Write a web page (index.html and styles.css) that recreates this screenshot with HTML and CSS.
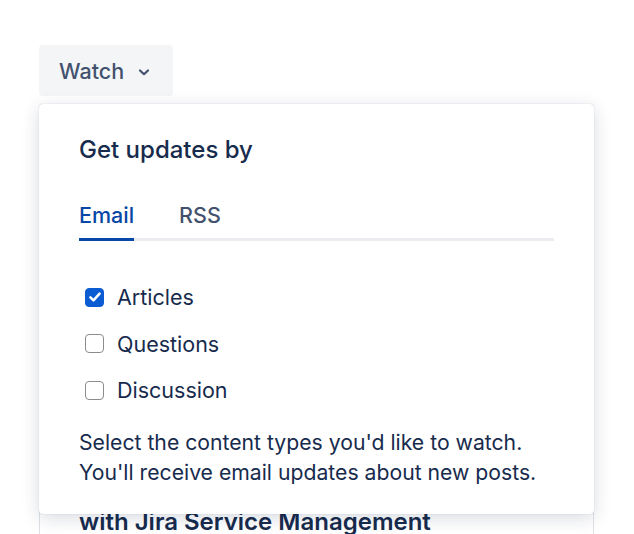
FILE: index.html
```html
<!DOCTYPE html>
<html>
<head>
<meta charset="utf-8">
<link rel="stylesheet" href="styles.css">
</head>
<body>
<div class="wrap">
  <button class="watch">Watch
    <svg class="chev" width="14" height="14" viewBox="0 0 14 14"><path d="M3 5.5 L7 9.2 L11 5.5" fill="none" stroke="#42526e" stroke-width="2.2" stroke-linecap="round" stroke-linejoin="round"/></svg>
  </button>
  <div class="card">
    <h2 class="card-title">Automate your service desk<br>with Jira Service Management</h2>
  </div>
  <div class="popup">
    <h3 class="popup-title">Get updates by</h3>
    <div class="tabs">
      <div class="tab active">Email</div>
      <div class="tab">RSS</div>
    </div>
    <ul class="options">
      <li class="opt"><span class="box checked"><svg width="14" height="14" viewBox="0 0 14 14"><path d="M2.4 7.4 L5.5 10.4 L11.6 3.6" fill="none" stroke="#fff" stroke-width="2.5" stroke-linecap="round" stroke-linejoin="round"/></svg></span>Articles</li>
      <li class="opt"><span class="box"></span>Questions</li>
      <li class="opt"><span class="box"></span>Discussion</li>
    </ul>
    <p class="desc">Select the content types you'd like to watch.<br>You'll receive email updates about new posts.</p>
  </div>
</div>
</body>
</html>
```
FILE: styles.css
```css
* { box-sizing: border-box; }
html, body { margin: 0; padding: 0; background: #fff; overflow: hidden; }
body {
  font-family: Inter, "Noto Sans", sans-serif;
  color: #172b4d;
  height: 534px;
}
.wrap {
  position: relative;
  width: 555px;
  margin: 45px 0 0 39px;
}
.watch {
  display: flex;
  align-items: center;
  gap: 13px;
  height: 51px;
  padding: 0 22px 0 20px;
  border: 0;
  border-radius: 4px;
  background: #f4f5f7;
  color: #42526e;
  font-family: inherit;
  font-size: 21.5px;
  font-weight: 500;
}
.chev { margin-top: 2px; }
.card {
  margin-top: 54px;
  height: 600px;
  border: 1px solid #dfe1e6;
  border-radius: 4px;
  padding: 323px 39px 0;
}
.card-title {
  margin: 0;
  font-size: 24px;
  line-height: 32px;
  font-weight: 600;
  color: #172b4d;
}
.popup {
  position: absolute;
  top: 59px;
  left: 0;
  width: 555px;
  height: 410px;
  background: #fff;
  border-radius: 4px;
  box-shadow: 0 4px 18px rgba(9, 30, 66, 0.16), 0 0 1px rgba(9, 30, 66, 0.3);
  padding: 31px 40px 0;
}
.popup-title {
  margin: 0;
  font-size: 24px;
  line-height: 30px;
  font-weight: 550;
  color: #172b4d;
}
.tabs {
  display: flex;
  gap: 45px;
  margin-top: 36px;
  border-bottom: 3px solid #ebecf0;
}
.tab {
  font-size: 21.5px;
  line-height: 28px;
  font-weight: 500;
  color: #42526e;
  padding-bottom: 9px;
  margin-bottom: -3px;
  border-bottom: 3px solid transparent;
}
.tab.active {
  color: #0747a6;
  border-bottom-color: #0747a6;
}
.options {
  list-style: none;
  margin: 42px 0 0;
  padding: 0 0 0 6px;
  display: flex;
  flex-direction: column;
  gap: 18.5px;
}
.opt {
  display: flex;
  align-items: center;
  gap: 13px;
  font-size: 21.5px;
  line-height: 28px;
  color: #172b4d;
}
.box {
  width: 19px;
  height: 19px;
  border: 1.5px solid #8c8c8c;
  border-radius: 4px;
  display: flex;
  align-items: center;
  justify-content: center;
}
.box.checked {
  background: #0b5bd3;
  border-color: #0b5bd3;
}
.desc {
  margin: 23px 0 0;
  font-size: 21.2px;
  line-height: 30px;
  color: #172b4d;
}
```
